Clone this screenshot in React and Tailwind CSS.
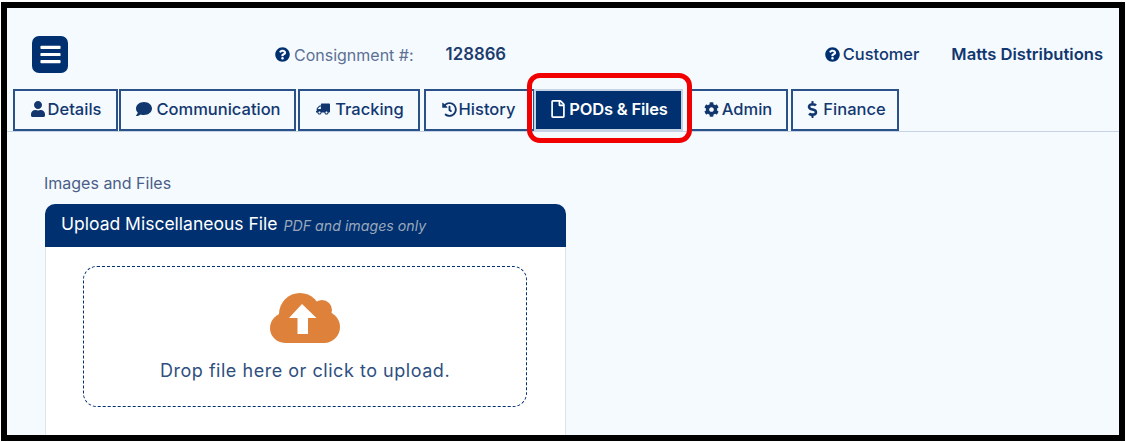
import React from "react";
import { FaUser, FaComment, FaTruck, FaHistory, FaRegFile, FaCog, FaDollarSign, FaQuestionCircle, FaBars } from "react-icons/fa";

function Tab({ icon, label, w, active, ml, gap = "gap-[2px]", extra = "" }) {
  return (
    <div
      className={`h-[42px] flex items-center justify-center pb-[2px] ${gap} ${extra} border-2 text-[16.5px] font-medium shrink-0 ${w} ${ml} ${
        active ? "bg-[#003070] border-[#c5d3e4] text-white font-semibold" : "border-[#2a5288] text-[#12376f]"
      }`}
    >
      {icon}
      <span className={active ? "tracking-[-0.2px]" : ""}>{label}</span>
    </div>
  );
}

function Cloud() {
  return (
    <svg width="70" height="52" viewBox="0 0 70 52">
      <g fill="#de813b">
        <circle cx="30" cy="22" r="21" />
        <circle cx="52" cy="18" r="10" />
        <circle cx="15" cy="36" r="15" />
        <circle cx="54" cy="35" r="16" />
        <rect x="15" y="28" width="40" height="23" />
      </g>
      <path fill="#fff" d="M32 12 L19 26 L27.5 26 L27.5 42 L38 42 L38 26 L46.5 26 Z" />
    </svg>
  );
}

export default function App() {
  return (
    <div className="w-[1126px] h-[442px] bg-white pt-[2px] px-px pb-px" style={{ fontFamily: "Inter, 'Noto Sans', sans-serif" }}>
      <div className="relative w-full h-full border-[6px] border-black bg-[#f5faff] overflow-hidden">
        <div className="h-[81px] flex items-start pt-[28px] pl-[25px] pr-[16px]">
          <div className="w-[36px] h-[37px] rounded-[7px] bg-[#003070] flex items-center justify-center text-white shrink-0">
            <FaBars size={23} />
          </div>
          <div className="h-[37px] flex items-center text-[#5c7094] text-[16px] ml-[207px]">
            <FaQuestionCircle size={15} className="text-[#003070] mr-[4px]" />
            <span>Consignment #:</span>
          </div>
          <div className="h-[37px] flex items-center text-[#1d3c6e] text-[16.8px] font-semibold ml-[32px]">128866</div>
          <div className="h-[37px] flex items-center text-[#12376f] text-[16.4px] font-medium ml-auto">
            <FaQuestionCircle size={15} className="text-[#003070] mr-[3px]" />
            <span>Customer</span>
          </div>
          <div className="h-[37px] flex items-center text-[#12376f] text-[16.6px] font-semibold ml-[32px]">Matts Distributions</div>
        </div>

        <div className="flex items-end pl-[6px] border-b border-[#c5d3e4] h-[43px]">
          <Tab icon={<FaUser size={16} />} label="Details" w="w-[105px]" />
          <Tab icon={<FaComment size={16} />} label="Communication" w="w-[177px]" ml="ml-px" gap="gap-[4px]" extra="pl-[2px]" />
          <Tab icon={<FaTruck size={14} className="-scale-x-100" />} label="Tracking" w="w-[122px]" ml="ml-[2px]" gap="gap-[5px]" extra="pl-[2px]" />
          <Tab icon={<FaHistory size={15} />} label="History" w="w-[111px]" ml="ml-[4px]" extra="pr-[2px]" />
          <Tab icon={<FaRegFile size={18} />} label="PODs & Files" w="w-[149px]" ml="ml-[-1px]" active />
          <Tab icon={<FaCog size={15} />} label="Admin" w="w-[100px]" ml="ml-[5px]" gap="gap-[3px]" />
          <Tab icon={<FaDollarSign size={17} />} label="Finance" w="w-[108px]" ml="ml-[3px]" />
        </div>

        <div className="pl-[38px] pt-[42px]">
          <div className="text-[#4a5f87] text-[16px] leading-[19px] ml-[-1px]">Images and Files</div>
          <div className="w-[521px] mt-[11px]">
            <div className="h-[43px] bg-[#003070] rounded-t-[10px] pl-[16px] pb-[3px] flex items-center text-white text-[17.5px]">
              <span>Upload Miscellaneous File</span>
              <span className="italic text-[14.2px] text-[#9aa7bb] ml-[6px] mt-[3px]">PDF and images only</span>
            </div>
            <div className="h-[200px] bg-white border-x border-[#dde3ea] pt-[19px] px-[37px]">
              <div className="h-[141px] w-[444px] border border-dashed border-[#003070] rounded-[14px] flex flex-col items-center pt-[25px]">
                <Cloud />
                <div className="text-[18px] text-[#2f4f80] mt-[16px] leading-[22px] tracking-[0.53px]">Drop file here or click to upload.</div>
              </div>
            </div>
          </div>
        </div>

        <div className="absolute left-[520px] top-[65px] w-[165px] h-[70px] border-[5px] border-[#f00000] rounded-[13px]" />
      </div>
    </div>
  );
}
